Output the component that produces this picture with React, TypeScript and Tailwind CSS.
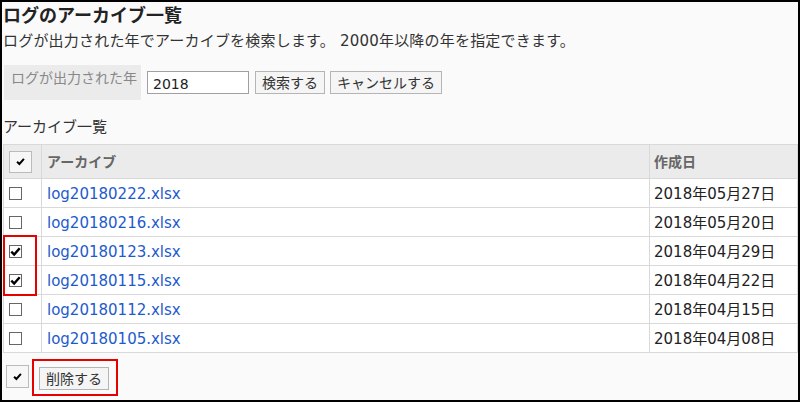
import React from "react";

const font = { fontFamily: '"DejaVu Sans", "Noto Sans CJK JP", sans-serif' };

const rows = [
  { name: "log20180222.xlsx", date: "2018年05月27日", checked: false },
  { name: "log20180216.xlsx", date: "2018年05月20日", checked: false },
  { name: "log20180123.xlsx", date: "2018年04月29日", checked: true },
  { name: "log20180115.xlsx", date: "2018年04月22日", checked: true },
  { name: "log20180112.xlsx", date: "2018年04月15日", checked: false },
  { name: "log20180105.xlsx", date: "2018年04月08日", checked: false },
];

function Check({ size = 10 }: { size?: number }) {
  return (
    <svg width={size} height={size} viewBox="0 0 10 10">
      <path d="M1.2 5.2 L3.8 7.8 L8.8 2" fill="none" stroke="#000" strokeWidth="2.2" />
    </svg>
  );
}

function Box({ checked }: { checked: boolean }) {
  return (
    <div className="w-[13px] h-[13px] border border-[#666] bg-white flex items-center justify-center">
      {checked && <Check size={11} />}
    </div>
  );
}

export default function App() {
  return (
    <div
      className="relative w-[800px] h-[402px] border-2 border-black bg-[#fafafa] text-[#333] overflow-hidden"
      style={font}
    >
      <div className="pt-[2px] pl-[1px]">
        <div className="h-6 leading-6 text-[18px] font-bold text-[#222]">ログのアーカイブ一覧</div>
        <div className="mt-[3px] h-5 leading-5 text-[15px] tracking-[0.2px]">
          ログが出力された年でアーカイブを検索します。 2000年以降の年を指定できます。
        </div>

        <div className="mt-[14px] flex items-start pl-[1px]">
          <div className="w-[137px] h-[35px] bg-[#ebebeb] pt-[3px] pl-[7px] text-[14px] leading-5 text-[#888]">
            ログが出力された年
          </div>
          <div className="ml-[6px] mt-[6px] w-[102px] h-[23px] border border-[#a0a0a0] bg-white text-[14px] leading-[22px] pl-[5px] pt-[1px] text-[#222]">
            2018
          </div>
          <button className="ml-[6px] mt-[6px] h-[23px] px-[6px] border border-[#b5b5b5] bg-[#f5f5f5] text-[14px] leading-[20px] text-[#333]">
            検索する
          </button>
          <button className="ml-[5px] mt-[6px] h-[23px] px-[6px] border border-[#b5b5b5] bg-[#f5f5f5] text-[14px] leading-[20px] text-[#333]">
            キャンセルする
          </button>
        </div>

        <div className="mt-[17px] h-5 leading-5 text-[15px]">アーカイブ一覧</div>

        <div className="mt-[7px] w-[795px] border border-[#d9d9d9] bg-white">
          <div className="flex h-[34px] bg-[#ebebeb] border-b border-[#d9d9d9]">
            <div className="w-[38px] border-r border-[#d9d9d9] flex items-center pl-[5px]">
              <div className="w-[23px] h-[22px] border border-[#bbb] bg-[#f7f7f7] flex items-center justify-center">
                <Check size={9} />
              </div>
            </div>
            <div className="w-[608px] border-r border-[#d9d9d9] flex items-center pl-[5px] pt-[1px] text-[14px] font-bold text-[#666]">
              アーカイブ
            </div>
            <div className="flex-1 flex items-center pl-[4px] pt-[1px] text-[14px] font-bold text-[#666]">作成日</div>
          </div>
          {rows.map((r, i) => (
            <div
              key={r.name}
              className={
                i < rows.length - 1
                  ? "flex h-[29px] border-b border-[#d9d9d9]"
                  : "flex h-[28px]"
              }
            >
              <div className="w-[38px] border-r border-[#d9d9d9] flex items-center pl-[5px] pt-[1px]">
                <Box checked={r.checked} />
              </div>
              <div className="w-[608px] border-r border-[#d9d9d9] flex items-center pl-[5px] pt-[2px] text-[15px] text-[#1d5bcc]">
                {r.name}
              </div>
              <div className="flex-1 flex items-center pl-[4px] pt-[2px] text-[15px] text-[#222]">{r.date}</div>
            </div>
          ))}
        </div>

        <div className="mt-[12px] flex items-start pl-[3px]">
          <div className="w-[23px] h-[23px] border border-[#bbb] bg-[#f7f7f7] flex items-center justify-center">
            <Check size={9} />
          </div>
          <button className="ml-[10px] mt-[2px] h-[23px] w-[70px] border border-[#b5b5b5] bg-[#f5f5f5] text-[14px] leading-[20px] text-[#333]">
            削除する
          </button>
        </div>
      </div>

      <div className="absolute left-[1px] top-[233px] w-[34px] h-[61px] border-2 border-[#e60000]" />
      <div className="absolute left-[30px] top-[357px] w-[86px] h-[37px] border-2 border-[#e60000]" />
    </div>
  );
}
